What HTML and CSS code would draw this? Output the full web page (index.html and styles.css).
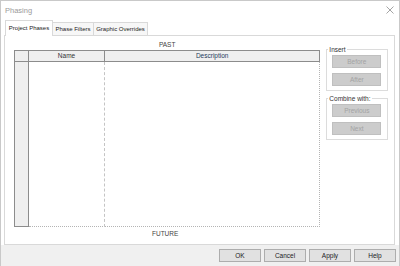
FILE: index.html
```html
<!DOCTYPE html>
<html lang="en">
<head>
  <meta charset="UTF-8">
  <title>Phasing</title>
  <link rel="stylesheet" href="styles.css">
</head>
<body>
  <div class="window">
    <!-- タイトルバー -->
    <div class="titlebar">
      <span class="title">Phasing</span>
      <svg class="close" width="8" height="8" viewBox="0 0 8 8">
        <path d="M0.5 0.5 L7.5 7.5 M7.5 0.5 L0.5 7.5" stroke="#9a9a9a" stroke-width="0.9" fill="none"/>
      </svg>
    </div>

    <div class="tab-area">
      <div class="tabs">
        <div class="tab active tab-phases">Project Phases</div>
        <div class="tab tab-filters">Phase Filters</div>
        <div class="tab tab-overrides">Graphic Overrides</div>
      </div>

      <div class="panel">
        <div class="phases">
          <div class="edge-label">PAST</div>
          <div class="grid">
            <div class="corner"></div>
            <div class="hd name">Name</div>
            <div class="hd desc">Description</div>
            <div class="rowhead"></div>
            <div class="cell name"></div>
            <div class="cell desc"></div>
          </div>
          <div class="edge-label future">FUTURE</div>
        </div>

        <div class="side">
          <fieldset class="group">
            <legend>Insert</legend>
            <button class="btn" disabled>Before</button>
            <button class="btn" disabled>After</button>
          </fieldset>
          <fieldset class="group">
            <legend>Combine with:</legend>
            <button class="btn" disabled>Previous</button>
            <button class="btn" disabled>Next</button>
          </fieldset>
        </div>
      </div>
    </div>

    <!-- 下部ボタン -->
    <div class="footer">
      <button class="fbtn">OK</button>
      <button class="fbtn">Cancel</button>
      <button class="fbtn">Apply</button>
      <button class="fbtn">Help</button>
    </div>
  </div>
</body>
</html>
```

FILE: styles.css
```css
/* 基本設定 */
* {
  box-sizing: border-box;
}
body {
  margin: 0;
  font-family: "Liberation Sans", Arial, sans-serif;
  font-size: 6.5px;
  color: #333;
  background-color: #fff;
}
.window {
  width: 400px;
  height: 266px;
  display: flex;
  flex-direction: column;
  border: 1px solid #c9c9c9;
  background-color: #fff;
}

/* タイトルバー */
.titlebar {
  height: 19px;
  display: flex;
  align-items: center;
  justify-content: space-between;
  padding: 0 5px 0 4px;
  flex-shrink: 0;
}
.title {
  font-size: 7.5px;
  color: #9a9a9a;
}
.close {
  margin-top: -1px;
}

/* タブ */
.tab-area {
  flex: 1;
  display: flex;
  flex-direction: column;
  padding: 0 4px 0 3px;
}
.tabs {
  display: flex;
  align-items: flex-end;
  height: 15px;
  padding-left: 1px;
}
.tab {
  height: 13px;
  line-height: 12px;
  padding: 0;
  font-size: 6px;
  text-align: center;
  white-space: nowrap;
  border: 1px solid #d9d9d9;
  border-bottom: none;
  background-color: #f7f7f7;
  margin-left: -1px;
  color: #222;
}
.tab.active {
  background-color: #fff;
  position: relative;
  z-index: 1;
  margin-bottom: -1px;
  height: 16px;
  line-height: 14px;
  margin-left: 0;
}
.tab-phases {
  width: 48px;
}
.tab-filters {
  width: 42px;
}
.tab-overrides {
  width: 55px;
}
.panel {
  height: 210px;
  border: 1px solid #d9d9d9;
  display: flex;
  padding: 3px 6px 0 9px;
  gap: 6px;
}

/* 表 */
.phases {
  width: 308px;
  display: flex;
  flex-direction: column;
}
.edge-label {
  height: 11px;
  line-height: 11px;
  text-align: center;
  color: #444;
}
.edge-label.future {
  height: 14px;
  line-height: 14px;
  padding-right: 4px;
}
.grid {
  height: 177px;
  display: grid;
  grid-template-columns: 15px 76px 1fr;
  grid-template-rows: 12px 1fr;
}
.corner {
  background-color: #efefef;
  border: 1px solid #8c8c8c;
}
.hd {
  background-color: #efefef;
  border-top: 1px solid #8c8c8c;
  border-bottom: 1px solid #8c8c8c;
  border-right: 1px solid #8c8c8c;
  text-align: center;
  line-height: 10px;
  color: #333;
}
.hd.desc {
  color: #1e3a5c;
}
.rowhead {
  background-color: #efefef;
  border: 1px solid #8c8c8c;
  border-top: none;
}
.cell.name {
  border-right: 1px dashed #c4c4c4;
  border-bottom: 1px dotted #b4b4b4;
}
.cell.desc {
  border-right: 1px dotted #b4b4b4;
  border-bottom: 1px dotted #b4b4b4;
}

/* 右側のグループ */
.side {
  width: 62px;
  padding-top: 6px;
  display: flex;
  flex-direction: column;
  gap: 3px;
}
.group {
  margin: 0;
  border: 1px solid #dcdcdc;
  padding: 1px 5px 4px 5px;
  display: flex;
  flex-direction: column;
  gap: 5px;
}
.group legend {
  padding: 0 1px;
  margin-left: -4px;
  line-height: 9px;
  color: #333;
}
.group + .group .btn:first-child {
  margin-top: 1px;
}
.btn {
  width: 49px;
  height: 13px;
  padding: 0;
  font: inherit;
  background-color: #cccccc;
  border: 1px solid #bfbfbf;
  color: #a3a3a3;
}

/* フッター */
.footer {
  height: 22px;
  flex-shrink: 0;
  background-color: #f0f0f0;
  display: flex;
  justify-content: flex-end;
  align-items: flex-start;
  gap: 3px;
  padding: 4px 3px 0 0;
}
.fbtn {
  width: 42px;
  height: 13px;
  padding: 0;
  font: inherit;
  color: #222;
  background-color: #e1e1e1;
  border: 1px solid #adadad;
}
```
